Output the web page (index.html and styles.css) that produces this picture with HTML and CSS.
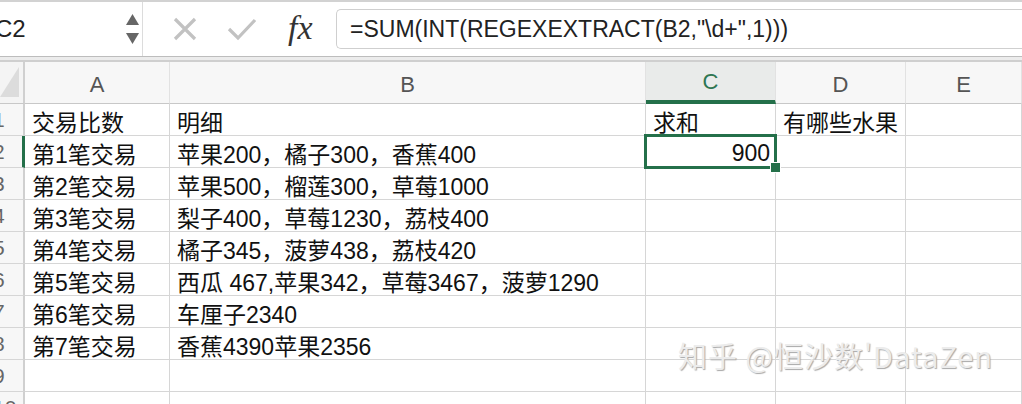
FILE: index.html
```html
<!DOCTYPE html>
<html lang="zh-CN">
<head>
    <meta charset="UTF-8">
    <title>REGEXEXTRACT 求和</title>
    <link rel="stylesheet" href="styles.css">
</head>
<body>
    <div class="toolbar">
        <div class="name-box">
            <span class="name-text">C2</span>
            <span class="spinner">
                <svg width="13" height="32" viewBox="0 0 13 32">
                    <polygon points="6.5,1 13,12 0,12" fill="#666"/>
                    <polygon points="0,20 13,20 6.5,31" fill="#666"/>
                </svg>
            </span>
        </div>
        <div class="actions">
            <svg class="icon" width="26" height="26" viewBox="0 0 26 26">
                <path d="M3 3 L23 23 M23 3 L3 23" stroke="#c2c2c2" stroke-width="3.2" fill="none"/>
            </svg>
            <svg class="icon" width="30" height="26" viewBox="0 0 30 26">
                <path d="M2 13 L11 22 L28 4" stroke="#c2c2c2" stroke-width="3.2" fill="none"/>
            </svg>
            <span class="fx">fx</span>
        </div>
        <div class="formula">=SUM(INT(REGEXEXTRACT(B2,"\d+",1)))</div>
    </div>
    <div class="divider"></div>

    <div class="sheet">
        <div class="corner"></div>
        <div class="col-head">A</div>
        <div class="col-head">B</div>
        <div class="col-head active">C</div>
        <div class="col-head">D</div>
        <div class="col-head">E</div>

        <div class="row-head"><span>1</span></div>
        <div class="cell">交易比数</div>
        <div class="cell">明细</div>
        <div class="cell">求和</div>
        <div class="cell">有哪些水果</div>
        <div class="cell"></div>

        <div class="row-head active"><span>2</span></div>
        <div class="cell">第1笔交易</div>
        <div class="cell">苹果200，橘子300，香蕉400</div>
        <div class="cell num selected">900</div>
        <div class="cell"></div>
        <div class="cell"></div>

        <div class="row-head"><span>3</span></div>
        <div class="cell">第2笔交易</div>
        <div class="cell">苹果500，榴莲300，草莓1000</div>
        <div class="cell"></div>
        <div class="cell"></div>
        <div class="cell"></div>

        <div class="row-head"><span>4</span></div>
        <div class="cell">第3笔交易</div>
        <div class="cell">梨子400，草莓1230，荔枝400</div>
        <div class="cell"></div>
        <div class="cell"></div>
        <div class="cell"></div>

        <div class="row-head"><span>5</span></div>
        <div class="cell">第4笔交易</div>
        <div class="cell">橘子345，菠萝438，荔枝420</div>
        <div class="cell"></div>
        <div class="cell"></div>
        <div class="cell"></div>

        <div class="row-head"><span>6</span></div>
        <div class="cell">第5笔交易</div>
        <div class="cell">西瓜 467,苹果342，草莓3467，菠萝1290</div>
        <div class="cell"></div>
        <div class="cell"></div>
        <div class="cell"></div>

        <div class="row-head"><span>7</span></div>
        <div class="cell">第6笔交易</div>
        <div class="cell">车厘子2340</div>
        <div class="cell"></div>
        <div class="cell"></div>
        <div class="cell"></div>

        <div class="row-head"><span>8</span></div>
        <div class="cell">第7笔交易</div>
        <div class="cell">香蕉4390苹果2356</div>
        <div class="cell"></div>
        <div class="cell"></div>
        <div class="cell"></div>

        <div class="row-head"><span>9</span></div>
        <div class="cell"></div>
        <div class="cell"></div>
        <div class="cell"></div>
        <div class="cell"></div>
        <div class="cell"></div>

        <div class="row-head"><span>10</span></div>
        <div class="cell"></div>
        <div class="cell"></div>
        <div class="cell"></div>
        <div class="cell"></div>
        <div class="cell"></div>
    </div>

    <div class="watermark">知乎 @恒沙数'DataZen</div>
</body>
</html>
```

FILE: styles.css
```css
body {
    margin: 0;
    width: 1022px;
    height: 404px;
    overflow: hidden;
    background: #fff;
    font-family: "Liberation Sans", "Noto Sans CJK SC", sans-serif;
    color: #1a1a1a;
    position: relative;
}
.toolbar {
    height: 54px;
    border-top: 2px solid #d2d2d2;
    display: flex;
    align-items: center;
    background: #fff;
}
.name-box {
    width: 143px;
    height: 54px;
    border-right: 1px solid #dcdcdc;
    display: flex;
    align-items: center;
    justify-content: space-between;
    overflow: hidden;
    box-sizing: border-box;
    padding-right: 3px;
}
.name-text {
    font-size: 24px;
    margin-left: -5px;
    color: #222;
}
.spinner {
    display: flex;
}
.actions {
    display: flex;
    align-items: center;
    width: 192px;
    padding-left: 29px;
    gap: 32px;
    box-sizing: border-box;
}
.actions .icon:nth-child(2) {
    margin-left: -3px;
}
.fx {
    font-family: "Liberation Serif", "DejaVu Serif", serif;
    font-style: italic;
    font-size: 34px;
    color: #333;
    margin-left: -1px;
    margin-top: -3px;
}
.formula {
    flex: 1;
    height: 38px;
    border: 1px solid #cfcfcf;
    border-right: none;
    border-radius: 5px 0 0 5px;
    margin-left: 1px;
    display: flex;
    align-items: center;
    padding-left: 13px;
    font-size: 23px;
    color: #222;
}
.divider {
    height: 3px;
    border-top: 1px solid #bdbdbd;
    border-bottom: 2px solid #cfcfcf;
    background: #ececec;
}
.sheet {
    display: grid;
    grid-template-columns: 25px 145px 476px 130px 130px 1fr;
    grid-template-rows: 42px repeat(10, 32px);
}
.sheet > div {
    box-sizing: border-box;
    border-right: 1px solid #d6d6d6;
    border-bottom: 1px solid #d6d6d6;
}
.corner {
    background: #f4f4f4;
    position: relative;
    border-right: 2px solid #d0d0d0 !important;
    border-bottom: 1px solid #c8c8c8 !important;
}
.corner::after {
    content: "";
    position: absolute;
    left: 0;
    bottom: 6px;
    border-left: 19px solid transparent;
    border-bottom: 30px solid #dcdcdc;
}
.col-head {
    background: #f7f7f7;
    display: flex;
    align-items: center;
    justify-content: center;
    padding-top: 4px;
    font-size: 22px;
    color: #555;
    border-right: 1px solid #e2e2e2 !important;
    border-bottom: 1px solid #c8c8c8 !important;
}
.col-head.active {
    background: #e9ebea;
    color: #2f7652;
    border-bottom: 4px solid #24704a !important;
    padding-top: 1px;
}
.row-head {
    background: #f7f7f7;
    overflow: hidden;
    display: flex;
    align-items: center;
    font-size: 21px;
    color: #666;
    border-right: 2px solid #d0d0d0 !important;
}
.row-head span {
    margin-left: -7px;
}
.row-head.active {
    border-right: 3px solid #24704a !important;
}
.cell {
    display: flex;
    align-items: center;
    padding: 3px 0 0 7px;
    font-size: 23px;
    white-space: nowrap;
    color: #111;
}
.cell.num {
    justify-content: flex-end;
    padding-right: 5px;
}
.cell.selected {
    position: relative;
}
.cell.selected::after {
    content: "";
    position: absolute;
    left: -2px;
    top: -2px;
    right: -2px;
    bottom: -2px;
    border: 3px solid #24704a;
}
.cell.selected::before {
    content: "";
    position: absolute;
    right: -6px;
    bottom: -6px;
    width: 9px;
    height: 9px;
    background: #24704a;
    border: 1px solid #fff;
    z-index: 2;
}
.watermark {
    position: absolute;
    left: 678px;
    top: 334px;
    font-family: "Noto Sans CJK SC", sans-serif;
    font-size: 29px;
    color: #ececec;
    text-shadow: 1px 1px 1px #a8a8a8;
    letter-spacing: 1px;
    white-space: nowrap;
}
```
